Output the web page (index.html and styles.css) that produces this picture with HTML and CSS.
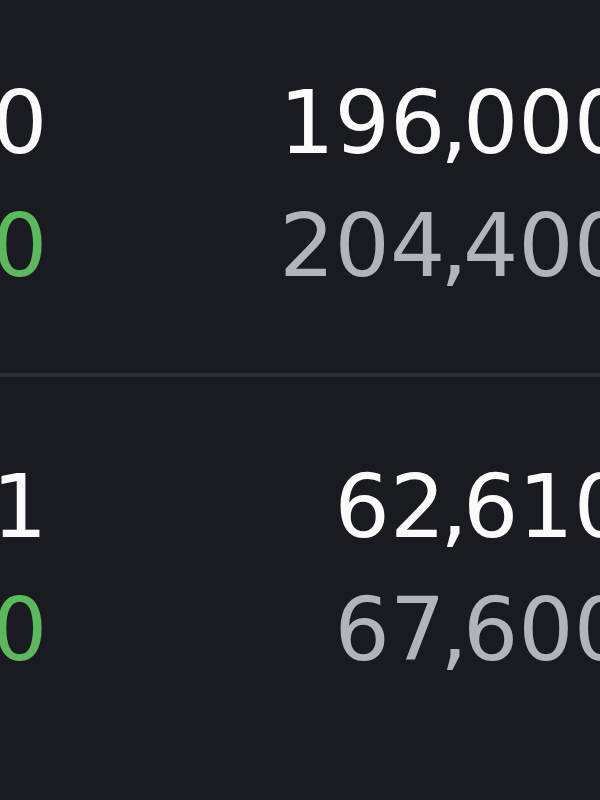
FILE: index.html
```html
<!DOCTYPE html>
<html lang="en">
<head>
<meta charset="utf-8">
<title>Values</title>
<link rel="stylesheet" href="styles.css">
</head>
<body>
<div class="table">
  <section class="group">
    <div class="row"><span class="left primary">0</span><span class="right primary">196<span class="sep">,</span>000</span></div>
    <div class="row"><span class="left positive">0</span><span class="right muted">204<span class="sep">,</span>400</span></div>
  </section>
  <section class="group last">
    <div class="row"><span class="left primary">1</span><span class="right primary">62<span class="sep">,</span>610</span></div>
    <div class="row"><span class="left positive">0</span><span class="right muted">67<span class="sep">,</span>600</span></div>
  </section>
</div>
</body>
</html>
```
FILE: styles.css
```css
html, body {
  margin: 0;
  padding: 0;
  background: #1a1b20;
  overflow: hidden;
  width: 600px;
  height: 800px;
}
.table {
  width: 637px;
  margin-left: -8px;
  font-family: "DejaVu Sans", sans-serif;
  font-size: 87px;
  line-height: 123px;
  font-variant-numeric: tabular-nums;
}
.group {
  padding: 62px 0 65px;
  border-bottom: 4px solid #2e2f35;
}
.group.last {
  padding-top: 69px;
  border-bottom: none;
}
.row {
  display: flex;
  justify-content: space-between;
  white-space: nowrap;
}
.left { width: 55px; text-align: right; }
.right { text-align: right; }
.sep { margin-left: -5px; letter-spacing: -5px; }
.primary { color: #fbfbfb; }
.muted { color: #b3b4b9; }
.positive { color: #5cb85c; }
```
